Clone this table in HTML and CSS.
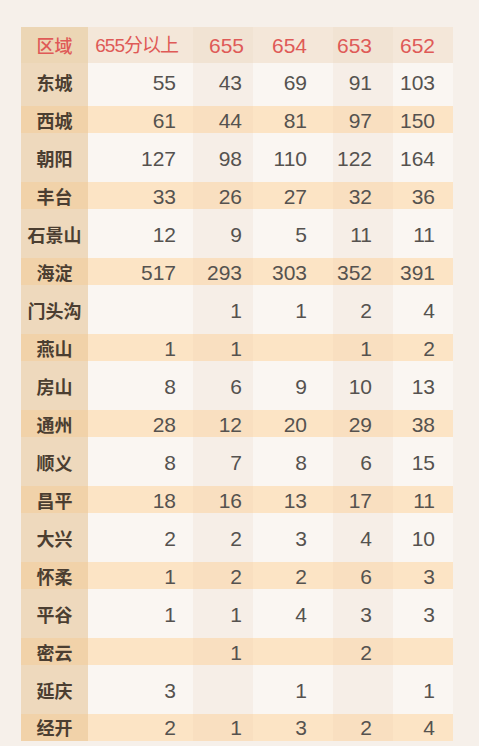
FILE: index.html
```html
<!DOCTYPE html>
<html lang="zh">
<head>
<meta charset="utf-8">
<title>区域分数段人数</title>
<link rel="stylesheet" href="styles.css">
</head>
<body>
<div class="table">
  <div class="row head"><div class="c">区域</div><div class="c">655分以上</div><div class="c">655</div><div class="c">654</div><div class="c">653</div><div class="c">652</div></div>
  <div class="row"><div class="c">东城</div><div class="c">55</div><div class="c">43</div><div class="c">69</div><div class="c">91</div><div class="c">103</div></div>
  <div class="row band"><div class="c">西城</div><div class="c">61</div><div class="c">44</div><div class="c">81</div><div class="c">97</div><div class="c">150</div></div>
  <div class="row"><div class="c">朝阳</div><div class="c">127</div><div class="c">98</div><div class="c">110</div><div class="c">122</div><div class="c">164</div></div>
  <div class="row band"><div class="c">丰台</div><div class="c">33</div><div class="c">26</div><div class="c">27</div><div class="c">32</div><div class="c">36</div></div>
  <div class="row"><div class="c">石景山</div><div class="c">12</div><div class="c">9</div><div class="c">5</div><div class="c">11</div><div class="c">11</div></div>
  <div class="row band"><div class="c">海淀</div><div class="c">517</div><div class="c">293</div><div class="c">303</div><div class="c">352</div><div class="c">391</div></div>
  <div class="row"><div class="c">门头沟</div><div class="c"></div><div class="c">1</div><div class="c">1</div><div class="c">2</div><div class="c">4</div></div>
  <div class="row band"><div class="c">燕山</div><div class="c">1</div><div class="c">1</div><div class="c"></div><div class="c">1</div><div class="c">2</div></div>
  <div class="row"><div class="c">房山</div><div class="c">8</div><div class="c">6</div><div class="c">9</div><div class="c">10</div><div class="c">13</div></div>
  <div class="row band"><div class="c">通州</div><div class="c">28</div><div class="c">12</div><div class="c">20</div><div class="c">29</div><div class="c">38</div></div>
  <div class="row"><div class="c">顺义</div><div class="c">8</div><div class="c">7</div><div class="c">8</div><div class="c">6</div><div class="c">15</div></div>
  <div class="row band"><div class="c">昌平</div><div class="c">18</div><div class="c">16</div><div class="c">13</div><div class="c">17</div><div class="c">11</div></div>
  <div class="row"><div class="c">大兴</div><div class="c">2</div><div class="c">2</div><div class="c">3</div><div class="c">4</div><div class="c">10</div></div>
  <div class="row band"><div class="c">怀柔</div><div class="c">1</div><div class="c">2</div><div class="c">2</div><div class="c">6</div><div class="c">3</div></div>
  <div class="row"><div class="c">平谷</div><div class="c">1</div><div class="c">1</div><div class="c">4</div><div class="c">3</div><div class="c">3</div></div>
  <div class="row band"><div class="c">密云</div><div class="c"></div><div class="c">1</div><div class="c"></div><div class="c">2</div><div class="c"></div></div>
  <div class="row"><div class="c">延庆</div><div class="c">3</div><div class="c"></div><div class="c">1</div><div class="c"></div><div class="c">1</div></div>
  <div class="row band last"><div class="c">经开</div><div class="c">2</div><div class="c">1</div><div class="c">3</div><div class="c">2</div><div class="c">4</div></div>
</div>
</body>
</html>
```
FILE: styles.css
```css
html, body {
  margin: 0;
  padding: 0;
  background: #f6f0ea;
}
body {
  width: 479px;
  height: 746px;
  overflow: hidden;
}
.table {
  display: grid;
  grid-template-columns: 67px 105px 60px 80px 60px 60px;
  grid-template-rows: 36px;
  grid-auto-rows: 38px;
  margin: 27px 0 0 21px;
  width: 432px;
  font-family: "Liberation Sans", Arial, "Noto Sans CJK SC", sans-serif;
  font-size: 21px;
  color: #55524f;
}
.row {
  display: contents;
}
.c {
  display: flex;
  align-items: center;
  justify-content: flex-end;
  background-color: #faf6f2;
  line-height: 1;
}
.c:nth-child(3), .c:nth-child(5) {
  background-color: #f6eee7;
}
.c:nth-child(1) {
  justify-content: center;
  background-color: #eed9bd;
  font-family: "Noto Sans CJK SC", sans-serif;
  font-weight: 700;
  font-size: 18px;
  color: #4b3e31;
}
.c:nth-child(2) { padding-right: 17px; }
.c:nth-child(3) { padding-right: 11px; }
.c:nth-child(4) { padding-right: 26px; }
.c:nth-child(5) { padding-right: 21px; }
.c:nth-child(6) { padding-right: 18px; }

.band .c {
  background-image: linear-gradient(transparent 5px, #fce4c5 5px, #fce4c5 32px, transparent 32px);
}
.band .c:nth-child(3), .band .c:nth-child(5) {
  background-image: linear-gradient(transparent 5px, #f9dfc0 5px, #f9dfc0 32px, transparent 32px);
}
.band .c:nth-child(1) {
  background-image: linear-gradient(transparent 5px, #f1d2a9 5px, #f1d2a9 32px, transparent 32px);
}
.last .c {
  align-self: start;
  height: 32px;
  padding-top: 4px;
  box-sizing: border-box;
}

.head .c {
  background-color: #f4e7d9;
  background-image: none;
  color: #df5a57;
  font-weight: 400;
  font-size: 21px;
}
.head .c:nth-child(3), .head .c:nth-child(5) {
  background-color: #f1e3d3;
}
.head .c:nth-child(1) {
  background-color: #ecd6b5;
  font-size: 18px;
  font-weight: 500;
  color: #df5a57;
}
.head .c:nth-child(2) {
  font-size: 19px;
  letter-spacing: -1px;
  font-family: "Liberation Sans", "Noto Sans CJK SC", sans-serif;
  padding-right: 15px;
}
.head .c:nth-child(3) { padding-right: 9px; }
```
